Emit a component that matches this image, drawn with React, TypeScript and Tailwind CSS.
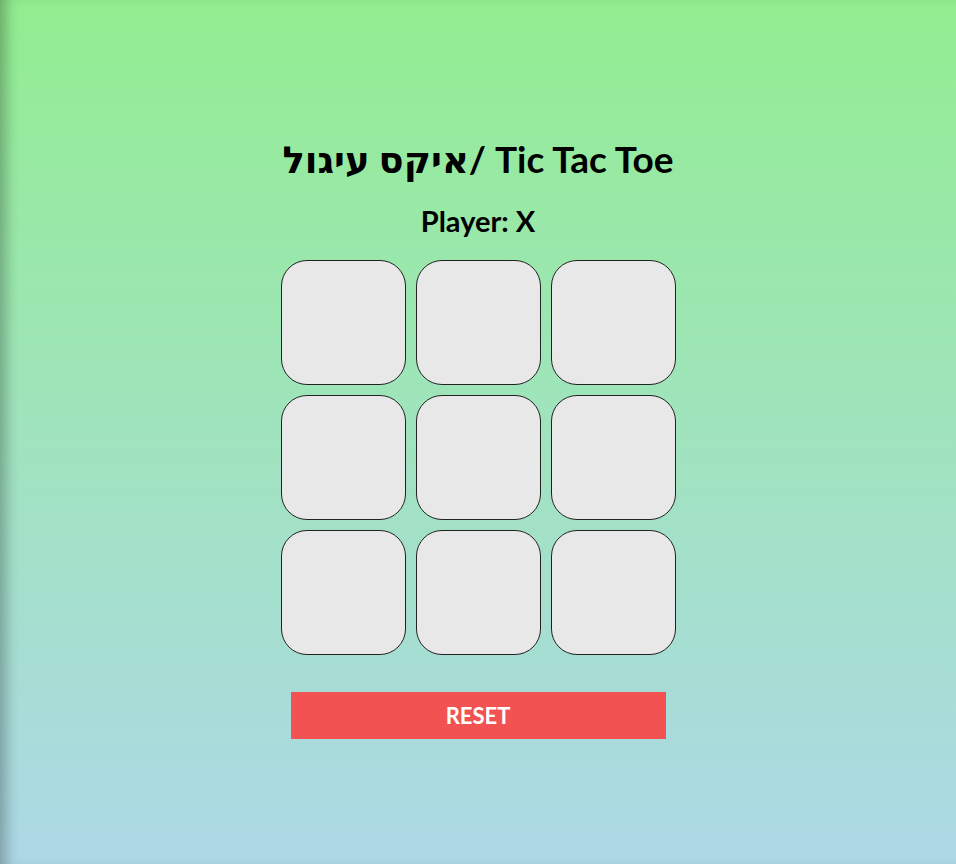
import { useState } from 'react'

export default function App() {
  const [board, setBoard] = useState<(string | null)[]>(Array(9).fill(null))
  const [player, setPlayer] = useState('X')

  const play = (i: number) => {
    if (board[i]) return
    const next = [...board]
    next[i] = player
    setBoard(next)
    setPlayer(player === 'X' ? 'O' : 'X')
  }

  const reset = () => {
    setBoard(Array(9).fill(null))
    setPlayer('X')
  }

  return (
    <div
      className="min-h-[864px] bg-gradient-to-b from-[#92ed8f] to-[#add8e6] shadow-[inset_14px_0_14px_-8px_rgba(0,0,0,0.28)] flex flex-col items-center text-black"
      style={{ fontFamily: '"Lato", "DejaVu Sans", sans-serif' }}
    >
      <h1 className="mt-[135px] text-[37px] leading-[48px] font-bold">איקס עיגול/ Tic Tac Toe</h1>
      <h2 className="mt-[20px] text-[29px] leading-[36px] font-bold">Player: {player}</h2>

      <div className="mt-[21px] grid grid-cols-3 gap-[10px]">
        {board.map((cell, i) => (
          <button
            key={i}
            onClick={() => play(i)}
            className="w-[125px] h-[125px] rounded-[26px] border border-[#222] bg-[#e8e8e8] text-6xl font-bold"
          >
            {cell}
          </button>
        ))}
      </div>

      <button
        onClick={reset}
        className="mt-[37px] w-[375px] h-[47px] bg-[#f25252] text-white text-[22px] font-bold"
      >
        RESET
      </button>
    </div>
  )
}
